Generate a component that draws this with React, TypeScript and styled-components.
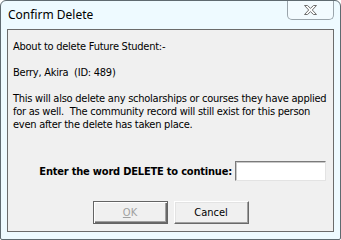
import * as React from "react"
import styled, { createGlobalStyle } from "styled-components"

const Global = createGlobalStyle`
  html, body {
    margin: 0;
    padding: 0;
    background: #ffffff;
  }
  * {
    box-sizing: border-box;
  }
`

const Window = styled.div`
  width: 341px;
  height: 240px;
  display: flex;
  flex-direction: column;
  background: #eefaff;
  border: 1px solid #5f6a70;
  border-radius: 6px 6px 2px 2px;
  overflow: hidden;
`

const TitleBar = styled.div`
  height: 28px;
  display: flex;
  align-items: flex-start;
`

const Title = styled.span`
  padding: 6px 0 0 7px;
  font-family: "Noto Sans", "Open Sans", sans-serif;
  font-size: 12px;
  line-height: 16px;
  color: #000;
`

const CloseButton = styled.div`
  margin: -1px 6px 0 auto;
  width: 47px;
  height: 20px;
  display: flex;
  align-items: center;
  justify-content: center;
  border: 1px solid #9aa4ab;
  border-top: none;
  border-radius: 0 0 5px 5px;
  background: #f3fbff;
`

const Panel = styled.div`
  flex: 1;
  margin: 0 6px 7px;
  padding: 10px 5px 5px;
  display: flex;
  flex-direction: column;
  background: #f0f0f0;
  border: 1px solid #6b6b6b;
  font-family: "DejaVu Sans", sans-serif;
  font-stretch: condensed;
  font-size: 11px;
  color: #000;
`

const Message = styled.div`
  line-height: 13px;
  letter-spacing: -0.25px;
  white-space: pre;
`

const PromptRow = styled.div`
  margin: 30px 2px 0 0;
  display: flex;
  justify-content: flex-end;
  align-items: center;
  gap: 3px;
`

const PromptLabel = styled.span`
  font-weight: bold;
  letter-spacing: -0.2px;
`

const TextBox = styled.input`
  width: 91px;
  height: 20px;
  margin: 0;
  padding: 1px 3px;
  border: 1px solid;
  border-color: #7a7a7a #e3e3e3 #e3e3e3 #7a7a7a;
  box-shadow: inset 1px 1px 0 #c8c8c8;
  background: #ffffff;
  font: inherit;
  outline: none;
`

const ButtonRow = styled.div`
  margin-top: 20px;
  display: flex;
  justify-content: center;
  gap: 6px;
`

const Button = styled.button<{ $default?: boolean }>`
  width: 75px;
  height: 23px;
  margin: 0;
  padding: 0;
  font: inherit;
  font-size: 11px;
  background: #f0f0f0;
  color: ${(p) => (p.disabled ? "#a0a0a0" : "#000")};
  border: 1px solid;
  border-color: ${(p) => (p.$default ? "#646464" : "#ffffff #696969 #696969 #ffffff")};
  box-shadow: ${(p) =>
    p.$default
      ? "inset 1px 1px 0 #ffffff, inset -1px -1px 0 #696969, inset -2px -2px 0 #a0a0a0"
      : "inset -1px -1px 0 #a0a0a0, inset 1px 1px 0 #e3e3e3"};
  u {
    text-decoration-thickness: 1px;
  }
`

const CloseIcon = () => (
  <svg width="13" height="10" viewBox="0 0 13 10">
    <polygon
      points="0.5,0.5 3.5,0.5 6.5,3.3 9.5,0.5 12.5,0.5 8.3,5 12.5,9.5 9.5,9.5 6.5,6.7 3.5,9.5 0.5,9.5 4.7,5"
      fill="#fbfbfb"
      stroke="#6f6f6f"
      strokeWidth="1"
      strokeLinejoin="round"
    />
  </svg>
)

const App: React.FC = () => {
  return (
    <>
      <Global />
      <Window>
        <TitleBar>
          <Title>Confirm Delete</Title>
          <CloseButton>
            <CloseIcon />
          </CloseButton>
        </TitleBar>
        <Panel>
          <Message>
            {"About to delete Future Student:-\n\nBerry, Akira  (ID: 489)\n\nThis will also delete any scholarships or courses they have applied\nfor as well.  The community record will still exist for this person\neven after the delete has taken place."}
          </Message>
          <PromptRow>
            <PromptLabel>Enter the word DELETE to continue:</PromptLabel>
            <TextBox type="text" />
          </PromptRow>
          <ButtonRow>
            <Button $default disabled>
              <u>O</u>K
            </Button>
            <Button>Cancel</Button>
          </ButtonRow>
        </Panel>
      </Window>
    </>
  )
}

export default App
